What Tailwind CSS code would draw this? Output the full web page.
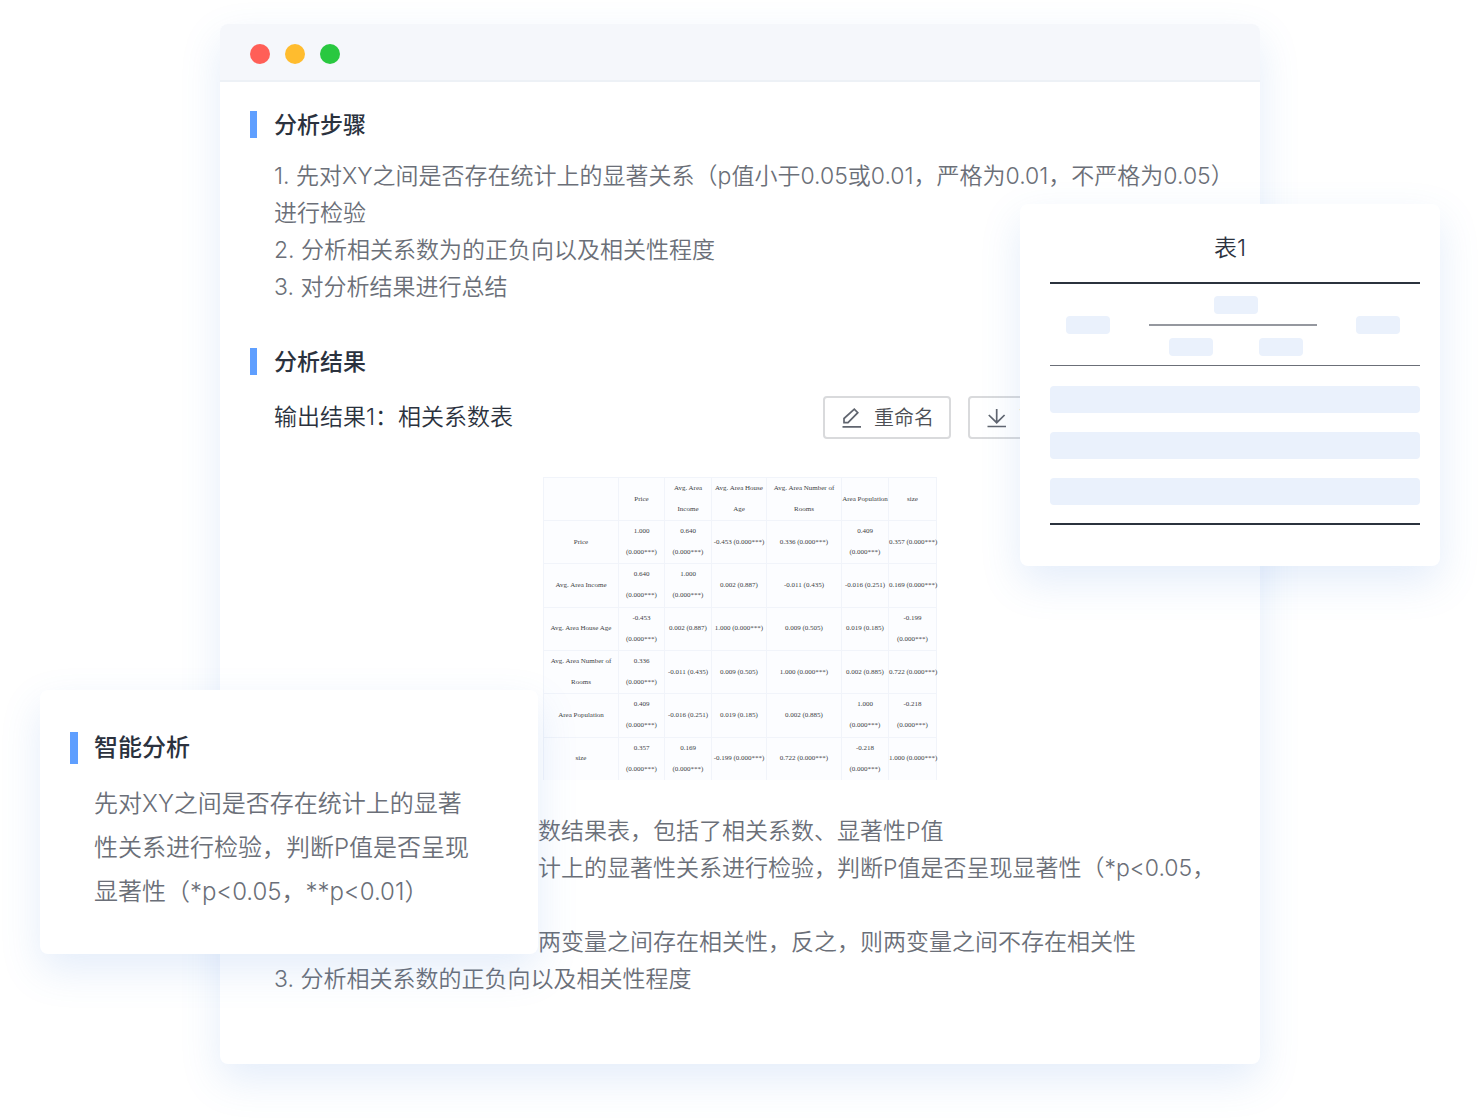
<!DOCTYPE html>
<html lang="zh-CN">
<head>
    <meta charset="utf-8">
    <meta name="viewport" content="width=device-width, initial-scale=1">
    <title>相关性分析</title>
    <script src="https://cdn.jsdelivr.net/npm/@tailwindcss/browser@4"></script>
</head>
<body class="relative min-h-screen bg-white overflow-x-hidden font-['Inter','Noto_Sans_CJK_SC',sans-serif] font-[350] text-[23px] text-[#6b6f78]">

<!-- Report window -->
<main class="mx-[220px] mt-6 mb-14 rounded-lg bg-white shadow-[0_16px_40px_rgba(74,137,220,0.15)]">
    <header class="flex items-center gap-[15px] h-[58px] pt-1 px-[30px] rounded-t-lg bg-[#f5f7fb] border-b-2 border-[#edf1f6]">
        <span class="size-5 rounded-full bg-[#ff5f57]"></span>
        <span class="size-5 rounded-full bg-[#ffbc2e]"></span>
        <span class="size-5 rounded-full bg-[#29c840]"></span>
    </header>

    <!-- Steps -->
    <section class="pt-[29px] pl-[30px]">
        <h2 class="border-l-[7px] border-[#5f9fff] pl-[17px] pt-px leading-[26px] font-medium text-[#2b323e]">分析步骤</h2>
        <div class="mt-5 pl-6 leading-[37px] whitespace-nowrap">
            <p>1. 先对XY之间是否存在统计上的显著关系（p值小于0.05或0.01，严格为0.01，不严格为0.05）<br>进行检验</p>
            <p>2. 分析相关系数为的正负向以及相关性程度</p>
            <p>3. 对分析结果进行总结</p>
        </div>
    </section>

    <!-- Results -->
    <section class="pt-[42px] pl-[30px] pb-[66px]">
        <h2 class="border-l-[7px] border-[#5f9fff] pl-[17px] pt-px leading-[26px] font-medium text-[#2b323e]">分析结果</h2>
        <div class="mt-[21px] pl-6 pr-[184px] flex items-center justify-between">
            <h3 class="font-[350] text-[#2b323e]">输出结果1：相关系数表</h3>
            <div class="flex gap-[17px] text-xl text-[#4c4f55]">
                <button type="button" class="flex items-center gap-3 h-[43px] pl-[17px] pr-[15px] border-2 border-[#d9dadc] rounded-sm">
                    <svg class="size-5" viewBox="0 0 20 20" fill="none" stroke="#60656f" stroke-width="1.7"><path d="M.5 18.800h18.500M2 14.700v-4.200L12.300 1.200l3.500 3.500L6 14.700z"/></svg>
                    重命名
                </button>
                <button type="button" class="flex items-center gap-3 h-[43px] pl-[17px] pr-[15px] border-2 border-[#d9dadc] rounded-sm">
                    <svg class="size-5" viewBox="0 0 20 20" fill="none" stroke="#60656f" stroke-width="1.7"><path d="M.5 18.500h18.500M9.700 1v13.500M1.800 7l7.900 7.700L17.600 7"/></svg>
                    下载
                </button>
            </div>
        </div>

        <table class="table-fixed mt-[38px] ml-[293px] w-[393px] h-[303px] border-collapse bg-[#fcfdff] font-['Liberation_Serif',serif] font-normal text-[7px] leading-[21px] text-center text-[#3c3f45] [&_td]:border [&_td]:border-[#f1f4fa] [&_td]:p-0 [&_th]:border [&_th]:border-[#f1f4fa] [&_th]:p-0 [&_th]:font-normal [&_tr:last-child>*]:border-b-0">
            <colgroup>
                <col class="w-[75px]"><col class="w-[46px]"><col class="w-[47px]"><col class="w-[55px]"><col class="w-[75px]"><col class="w-[47px]"><col class="w-[48px]">
            </colgroup>
            <thead>
                <tr><th></th><th>Price</th><th>Avg. Area<br>Income</th><th>Avg. Area House<br>Age</th><th>Avg. Area Number of<br>Rooms</th><th class="whitespace-nowrap">Area Population</th><th>size</th></tr>
            </thead>
            <tbody class="whitespace-nowrap">
                <tr><th>Price</th><td>1.000<br>(0.000***)</td><td>0.640<br>(0.000***)</td><td>-0.453 (0.000***)</td><td>0.336 (0.000***)</td><td>0.409<br>(0.000***)</td><td>0.357 (0.000***)</td></tr>
                <tr><th>Avg. Area Income</th><td>0.640<br>(0.000***)</td><td>1.000<br>(0.000***)</td><td>0.002 (0.887)</td><td>-0.011 (0.435)</td><td>-0.016 (0.251)</td><td>0.169 (0.000***)</td></tr>
                <tr><th>Avg. Area House Age</th><td>-0.453<br>(0.000***)</td><td>0.002 (0.887)</td><td>1.000 (0.000***)</td><td>0.009 (0.505)</td><td>0.019 (0.185)</td><td>-0.199<br>(0.000***)</td></tr>
                <tr><th>Avg. Area Number of<br>Rooms</th><td>0.336<br>(0.000***)</td><td>-0.011 (0.435)</td><td>0.009 (0.505)</td><td>1.000 (0.000***)</td><td>0.002 (0.885)</td><td>0.722 (0.000***)</td></tr>
                <tr><th>Area Population</th><td>0.409<br>(0.000***)</td><td>-0.016 (0.251)</td><td>0.019 (0.185)</td><td>0.002 (0.885)</td><td>1.000<br>(0.000***)</td><td>-0.218<br>(0.000***)</td></tr>
                <tr><th>size</th><td>0.357<br>(0.000***)</td><td>0.169<br>(0.000***)</td><td>-0.199 (0.000***)</td><td>0.722 (0.000***)</td><td>-0.218<br>(0.000***)</td><td>1.000 (0.000***)</td></tr>
            </tbody>
        </table>

        <div class="mt-[33px] pl-6 leading-[37px] whitespace-nowrap">
            <!-- indented clear of the smart analysis card -->
            <div class="pl-[264px]">
                <p>数结果表，包括了相关系数、显著性P值</p>
                <p>计上的显著性关系进行检验，判断P值是否呈现显著性（*p&lt;0.05，</p>
                <p class="mt-[37px]">两变量之间存在相关性，反之，则两变量之间不存在相关性</p>
            </div>
            <p>3. 分析相关系数的正负向以及相关性程度</p>
        </div>
    </section>
</main>

<!-- Table preview card -->
<aside class="absolute right-10 top-[204px] w-[420px] pt-[30px] pl-[30px] pr-5 pb-[41px] rounded-lg bg-white shadow-[0_16px_40px_rgba(74,137,220,0.15)]">
    <h3 class="pr-[10px] leading-[28px] text-center font-[350] text-[#2b323e]">表1</h3>
    <div class="mt-5 flex items-center justify-between h-[83px] pl-4 pr-5 border-t-2 border-[#2b323e]">
        <span class="w-11 h-[18px] rounded-sm bg-[#eaf1fc]"></span>
        <div class="w-[168px] pt-[2px]">
            <div class="flex justify-center pl-5 pr-[14px] pb-[10px]">
                <span class="w-11 h-[18px] rounded-sm bg-[#eaf1fc]"></span>
            </div>
            <div class="flex justify-between pl-5 pr-[14px] pt-3 border-t-2 border-[#95989f]">
                <span class="w-11 h-[18px] rounded-sm bg-[#eaf1fc]"></span>
                <span class="w-11 h-[18px] rounded-sm bg-[#eaf1fc]"></span>
            </div>
        </div>
        <span class="w-11 h-[18px] rounded-sm bg-[#eaf1fc]"></span>
    </div>
    <div class="flex flex-col gap-[19px] pt-5 pb-[18px] border-t border-b-2 border-t-[#6b6f78] border-b-[#2b323e]">
        <div class="h-[27px] rounded-sm bg-[#eaf1fc]"></div>
        <div class="h-[27px] rounded-sm bg-[#eaf1fc]"></div>
        <div class="h-[27px] rounded-sm bg-[#eaf1fc]"></div>
    </div>
</aside>

<!-- Smart analysis card -->
<aside class="absolute left-10 top-[690px] w-[498px] pt-[42px] pl-[30px] pr-[66px] pb-[40px] rounded-lg bg-white text-2xl shadow-[0_16px_40px_rgba(74,137,220,0.15)]">
    <h2 class="border-l-8 border-[#5f9fff] pl-4 leading-[32px] font-medium text-[#2b323e]">智能分析</h2>
    <p class="mt-[18px] pl-6 leading-[44px] whitespace-nowrap">先对XY之间是否存在统计上的显著<br>性关系进行检验，判断P值是否呈现<br>显著性（*p&lt;0.05，**p&lt;0.01）</p>
</aside>

</body>
</html>
